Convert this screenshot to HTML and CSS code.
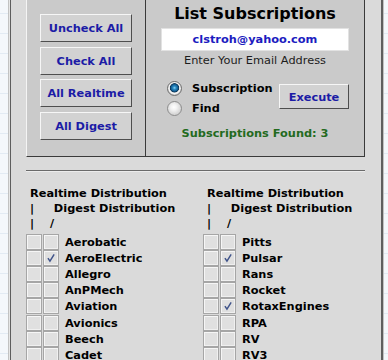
FILE: index.html
```html
<!DOCTYPE html>
<html>
<head>
<meta charset="utf-8">
<link rel="stylesheet" href="styles.css">
</head>
<body>
<div class="frame">
  <div class="panel">
    <div class="top">
      <div class="actions">
        <button class="btn">Uncheck All</button>
        <button class="btn">Check All</button>
        <button class="btn">All Realtime</button>
        <button class="btn">All Digest</button>
      </div>
      <div class="lookup">
        <h1 class="title">List Subscriptions</h1>
        <div class="email">clstroh@yahoo.com</div>
        <div class="hint">Enter Your Email Address</div>
        <div class="mode">
          <div class="radios">
            <label class="radio-row"><span class="radio on"></span>Subscription</label>
            <label class="radio-row"><span class="radio"></span>Find</label>
          </div>
          <button class="btn exec">Execute</button>
        </div>
        <div class="found">Subscriptions Found: 3</div>
      </div>
    </div>
    <div class="rule"></div>
    <div class="lists">
      <div class="col">
        <div class="head">Realtime Distribution<br>|&nbsp;&nbsp;&nbsp;&nbsp;&nbsp;Digest Distribution<br>|&nbsp;&nbsp;&nbsp;&nbsp;/</div>
        <div class="row"><span class="cb"></span><span class="cb"></span><span class="name">Aerobatic</span></div>
        <div class="row"><span class="cb"></span><span class="cb checked"><svg viewBox="0 0 16 16"><path d="M4.5 8.2 L6.8 11.6 L11.6 3.8"/></svg></span><span class="name">AeroElectric</span></div>
        <div class="row"><span class="cb"></span><span class="cb"></span><span class="name">Allegro</span></div>
        <div class="row"><span class="cb"></span><span class="cb"></span><span class="name">AnPMech</span></div>
        <div class="row"><span class="cb"></span><span class="cb"></span><span class="name">Aviation</span></div>
        <div class="row"><span class="cb"></span><span class="cb"></span><span class="name">Avionics</span></div>
        <div class="row"><span class="cb"></span><span class="cb"></span><span class="name">Beech</span></div>
        <div class="row"><span class="cb"></span><span class="cb"></span><span class="name">Cadet</span></div>
      </div>
      <div class="col">
        <div class="head">Realtime Distribution<br>|&nbsp;&nbsp;&nbsp;&nbsp;&nbsp;Digest Distribution<br>|&nbsp;&nbsp;&nbsp;&nbsp;/</div>
        <div class="row"><span class="cb"></span><span class="cb"></span><span class="name">Pitts</span></div>
        <div class="row"><span class="cb"></span><span class="cb checked"><svg viewBox="0 0 16 16"><path d="M4.5 8.2 L6.8 11.6 L11.6 3.8"/></svg></span><span class="name">Pulsar</span></div>
        <div class="row"><span class="cb"></span><span class="cb"></span><span class="name">Rans</span></div>
        <div class="row"><span class="cb"></span><span class="cb"></span><span class="name">Rocket</span></div>
        <div class="row"><span class="cb"></span><span class="cb checked"><svg viewBox="0 0 16 16"><path d="M4.5 8.2 L6.8 11.6 L11.6 3.8"/></svg></span><span class="name">RotaxEngines</span></div>
        <div class="row"><span class="cb"></span><span class="cb"></span><span class="name">RPA</span></div>
        <div class="row"><span class="cb"></span><span class="cb"></span><span class="name">RV</span></div>
        <div class="row"><span class="cb"></span><span class="cb"></span><span class="name">RV3</span></div>
      </div>
    </div>
  </div>
</div>
</body>
</html>
```

FILE: styles.css
```css
html, body {
  margin: 0;
  padding: 0;
}
body {
  background-color: #f4f7fb;
  background-image:
    repeating-linear-gradient(0deg, transparent 0, transparent 19px, #e2eaf3 19px, #e2eaf3 20px);
  font-family: "DejaVu Sans", Verdana, sans-serif;
  font-size: 11.33px;
  color: #000;
}
.frame {
  margin: 0 4px 0 8px;
  border-left: 1px solid #c2c2c2;
  border-right: 1px solid #c2c2c2;
  padding-left: 1px;
  background: #e6e6e6;
}
.panel {
  border-left: 1px solid #5e5e5e;
  border-right: 2px solid #5e5e5e;
  background: #dadada;
  padding: 0 16px 30px 15px;
}
.top {
  display: flex;
  height: 157px;
  box-sizing: border-box;
  background: #cacaca;
  border-left: 1px solid #f4f4f4;
  border-right: 1px solid #3a3a3a;
  border-bottom: 1px solid #3a3a3a;
}
.actions {
  border-right: 1px solid #3a3a3a;
  padding: 14px 13px 0 13px;
  box-sizing: border-box;
  width: 119px;
  display: flex;
  flex-direction: column;
  gap: 4.5px;
}
.btn {
  font-family: "DejaVu Sans", Verdana, sans-serif;
  font-size: 11.33px;
  font-weight: bold;
  color: #1c1ca6;
  background: #d2d2d2;
  border: 1px solid;
  border-color: #f6f6f6 #4e4e4e #4e4e4e #f6f6f6;
  padding: 0;
  margin: 0;
  height: 28px;
  width: 92px;
  box-sizing: border-box;
}
.lookup {
  flex: 1;
  padding-top: 4px;
  display: flex;
  flex-direction: column;
  align-items: center;
}
.title {
  margin: 0;
  font-size: 16px;
  line-height: 20px;
  font-weight: bold;
}
.email {
  margin-top: 4px;
  width: 188px;
  height: 23px;
  box-sizing: border-box;
  background: #fff;
  border: 1px solid #e2e2e2;
  text-align: center;
  font-weight: bold;
  color: #1c1cc0;
  line-height: 21px;
}
.hint {
  margin-top: 2px;
  line-height: 14px;
  color: #1c1c1c;
}
.mode {
  align-self: stretch;
  margin: 11px 15px 0 21px;
  display: flex;
  justify-content: space-between;
}
.radio-row {
  display: flex;
  align-items: center;
  height: 20px;
  font-weight: bold;
  gap: 10px;
}
.radio {
  width: 15px;
  height: 15px;
  box-sizing: border-box;
  border-radius: 50%;
  border: 1px solid #8c8c8c;
  background: radial-gradient(circle at 45% 40%, #ffffff 0, #f2f2f2 3px, #d6d6d6 7px);
}
.radio.on {
  border-color: #6e6e6e;
  background: radial-gradient(circle at 50% 45%, #8fd6f6 0, #2b8cc4 1.6px, #125d93 3.4px, #0b3352 4.3px, #e4e4e4 4.9px, #f8f8f8 5.6px, #c8c8c8 7px);
}
.btn.exec {
  width: 70px;
  height: 25px;
  margin-top: 6px;
}
.found {
  margin-top: 8px;
  line-height: 14px;
  font-weight: bold;
  color: #236a1e;
}
.rule {
  margin-top: 13px;
  border-top: 1px solid #6a6a6a;
  border-bottom: 1px solid #ececec;
}
.lists {
  display: grid;
  grid-template-columns: 177px 1fr;
  padding-top: 14px;
}
.head {
  padding-left: 4px;
  line-height: 15px;
  font-weight: bold;
  margin-bottom: 2.5px;
  white-space: nowrap;
  color: #000;
}
.row {
  display: flex;
  align-items: center;
  height: 16.2px;
}
.cb {
  width: 16px;
  height: 16px;
  box-sizing: border-box;
  border: 1px solid #a6a6a6;
  background: #e0e0e0;
  box-shadow: inset 1px 1px 0 #f6f6f6, inset -1px -1px 0 #f0f0f0;
  margin-right: 1px;
  display: flex;
}
.cb svg {
  width: 14px;
  height: 14px;
}
.cb svg path {
  fill: none;
  stroke: #40548a;
  stroke-width: 1.7;
}
.name {
  margin-left: 5px;
  font-weight: bold;
  line-height: 16px;
}
```
